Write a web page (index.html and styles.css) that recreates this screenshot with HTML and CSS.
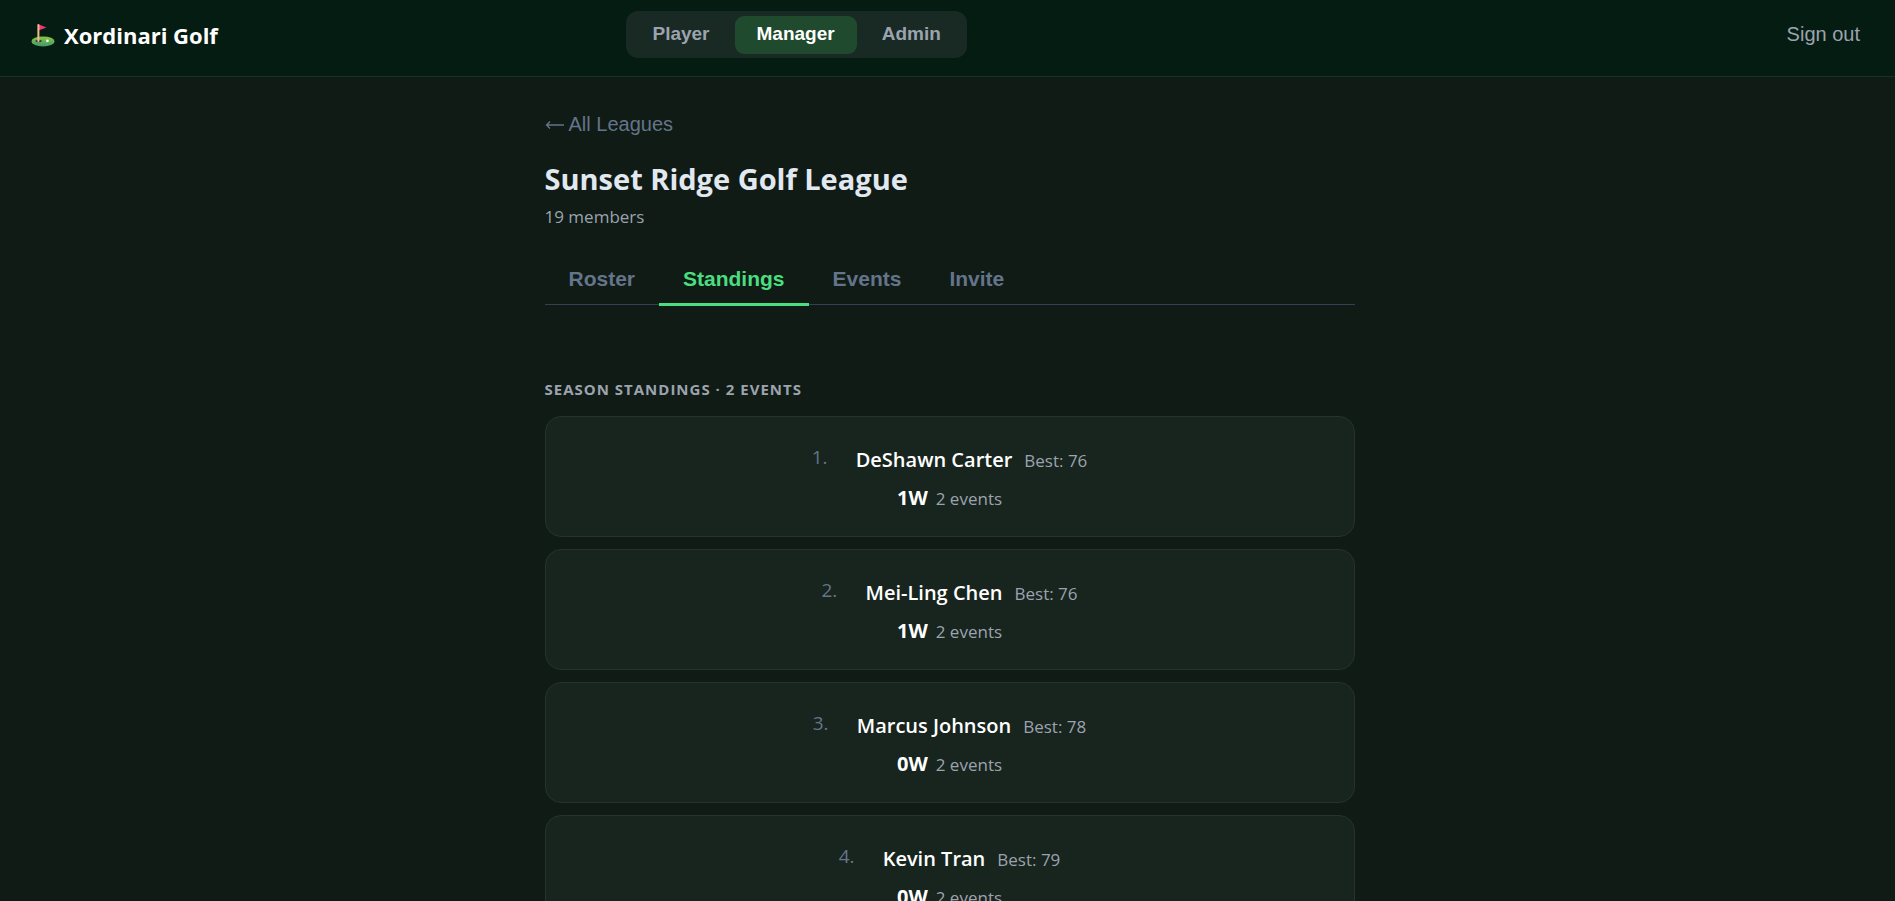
FILE: index.html
```html
<!DOCTYPE html>
<html lang="en">
<head>
  <meta charset="UTF-8">
  <meta name="viewport" content="width=device-width, initial-scale=1.0">
  <title>Xordinari Golf</title>
  <link rel="stylesheet" href="styles.css">
</head>
<body>
  <header class="topbar">
    <a class="brand" href="#">
      <svg class="brand-icon" viewBox="0 0 24 24" aria-hidden="true">
        <defs>
          <linearGradient id="green" x1="0" y1="0" x2="0" y2="1">
            <stop offset="0" stop-color="#8dc63f"/>
            <stop offset="1" stop-color="#3f9a6a"/>
          </linearGradient>
        </defs>
        <ellipse cx="12" cy="18.4" rx="11.5" ry="5" fill="url(#green)"/>
        <ellipse cx="7.6" cy="18" rx="3.2" ry="1.2" fill="#3c3a4e"/>
        <circle cx="16.4" cy="17.8" r="1.4" fill="#f4f4f4"/>
        <path d="M8 1.4 15.4 4.4 8 7.2z" fill="#f8337a"/>
        <rect x="6.4" y="1" width="2" height="18" rx="1" fill="#eebc8c"/>
      </svg>
      <span>Xordinari Golf</span>
    </a>
    <nav class="roles">
      <button class="role">Player</button>
      <button class="role active">Manager</button>
      <button class="role">Admin</button>
    </nav>
    <button class="sign-out">Sign out</button>
  </header>

  <main class="page">
    <button class="back"><svg class="back-arrow" viewBox="0 0 20 12" aria-hidden="true"><path d="M19 7H1.5M5 3.5 1.5 7 5 10.5"/></svg>All Leagues</button>
    <h1 class="league-name">Sunset Ridge Golf League</h1>
    <p class="members">19 members</p>

    <div class="tabs">
      <button class="tab">Roster</button>
      <button class="tab active">Standings</button>
      <button class="tab">Events</button>
      <button class="tab">Invite</button>
    </div>

    <h2 class="section-title">Season Standings · 2 Events</h2>
    <div class="standings">
      <div class="card">
        <div class="player-row">
          <span class="rank">1.</span>
          <span class="player">DeShawn Carter</span>
          <span class="meta">Best: 76</span>
        </div>
        <div class="score-row">
          <span class="wins">1W</span>
          <span class="meta">2 events</span>
        </div>
      </div>
      <div class="card">
        <div class="player-row">
          <span class="rank">2.</span>
          <span class="player">Mei-Ling Chen</span>
          <span class="meta">Best: 76</span>
        </div>
        <div class="score-row">
          <span class="wins">1W</span>
          <span class="meta">2 events</span>
        </div>
      </div>
      <div class="card">
        <div class="player-row">
          <span class="rank">3.</span>
          <span class="player">Marcus Johnson</span>
          <span class="meta">Best: 78</span>
        </div>
        <div class="score-row">
          <span class="wins">0W</span>
          <span class="meta">2 events</span>
        </div>
      </div>
      <div class="card">
        <div class="player-row">
          <span class="rank">4.</span>
          <span class="player">Kevin Tran</span>
          <span class="meta">Best: 79</span>
        </div>
        <div class="score-row">
          <span class="wins">0W</span>
          <span class="meta">2 events</span>
        </div>
      </div>
    </div>
  </main>
</body>
</html>
```

FILE: styles.css
```css
:root {
  --bg: #0f1b14;
  --bar: #051c13;
  --card: #18241e;
  --line: #26322c;
  --text: #e2e8f0;
  --muted: #9ca3af;
  --dim: #64748b;
  --accent: #4ade80;
  --ui: "Segoe UI", "Open Sans", sans-serif;
  --control: Arial, "Liberation Sans", sans-serif;
}

* {
  box-sizing: border-box;
}

html {
  scrollbar-width: none;
}

body {
  margin: 0;
  min-height: 100vh;
  background: var(--bg);
  color: var(--text);
  font-family: var(--ui);
}

button {
  border: none;
  background: none;
  padding: 0;
  font-family: var(--control);
  cursor: pointer;
}

.topbar {
  display: grid;
  grid-template-columns: 2fr auto 3fr;
  align-items: start;
  padding: 11px 35px 17px 31px;
  background: var(--bar);
  border-bottom: 1px solid #16302a;
}

.brand {
  display: flex;
  align-items: center;
  gap: 9px;
  height: 48px;
  color: #fff;
  font-size: 22px;
  font-weight: 700;
  text-decoration: none;
}

.brand-icon {
  width: 24px;
  height: 24px;
}

.roles {
  display: flex;
  gap: 3px;
  padding: 5px 4px 4px;
  border-radius: 12px;
  background: #182a23;
}

.role {
  height: 38px;
  padding: 0 22px 2px;
  border-radius: 9px;
  color: var(--muted);
  font-size: 19px;
  font-weight: 700;
}

.role.active {
  background: #1f4a2e;
  color: #fff;
}

.sign-out {
  justify-self: end;
  height: 46px;
  color: var(--muted);
  font-size: 20px;
}

.page {
  max-width: 814px;
  margin: 0 auto;
  padding: 34px 0 24px 4px;
}

.back {
  display: flex;
  align-items: center;
  gap: 4px;
  height: 26px;
  color: var(--dim);
  font-size: 20px;
}

.back-arrow {
  width: 20px;
  height: 12px;
  fill: none;
  stroke: currentColor;
  stroke-width: 1.3;
}

.league-name {
  margin: 21px 0 0;
  font-size: 29px;
  line-height: 42px;
}

.members {
  margin: 4px 0 0;
  color: var(--muted);
  font-size: 17px;
  line-height: 26px;
}

.tabs {
  display: flex;
  margin-top: 26px;
  border-bottom: 1px solid #334155;
}

.tab {
  height: 50px;
  margin-bottom: -2px;
  padding: 0 24px 2px;
  border-bottom: 3px solid transparent;
  color: var(--dim);
  font-size: 21px;
  font-weight: 700;
}

.tab.active {
  border-bottom-color: var(--accent);
  color: var(--accent);
}

.section-title {
  margin: 71px 0 14px;
  color: var(--muted);
  font-size: 15px;
  line-height: 26px;
  letter-spacing: 1px;
  text-transform: uppercase;
}

.standings {
  display: grid;
  gap: 12px;
}

.card {
  display: grid;
  gap: 11px;
  padding: 29px 24px 25px;
  border: 1px solid var(--line);
  border-radius: 16px;
  background: var(--card);
}

.player-row,
.score-row {
  display: flex;
  justify-content: center;
  align-items: baseline;
  line-height: 27px;
}

.player-row {
  gap: 12px;
}

.score-row {
  gap: 8px;
}

.rank {
  align-self: flex-start;
  width: 32px;
  color: var(--dim);
  font-size: 19px;
  line-height: 23px;
}

.player,
.wins {
  color: #fff;
  font-size: 20px;
  font-weight: 600;
}

.wins {
  font-weight: 700;
}

.meta {
  color: var(--muted);
  font-size: 17px;
  line-height: 24px;
}
```
